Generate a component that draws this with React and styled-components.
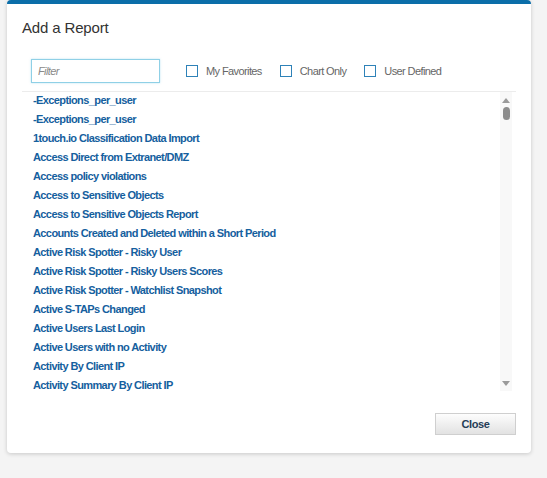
import React from "react";
import styled, { createGlobalStyle } from "styled-components";

const GlobalStyle = createGlobalStyle`
  body {
    margin: 0;
    background: #f4f4f4;
    font-family: "Liberation Sans", Arial, sans-serif;
  }
`;

const Page = styled.div`
  padding-left: 7px;
  height: 478px;
  box-sizing: border-box;
`;

const Modal = styled.div`
  width: 524px;
  height: 453px;
  box-sizing: border-box;
  background: #fff;
  border-top: 4px solid #0b6ea9;
  border-radius: 4px;
  box-shadow: 0 1px 4px rgba(0, 0, 0, 0.18);
  padding: 0 15px 18px 15px;
  display: flex;
  flex-direction: column;
`;

const Title = styled.h2`
  margin: 0;
  height: 47px;
  display: flex;
  align-items: center;
  font-size: 15px;
  font-weight: normal;
  letter-spacing: -0.15px;
  color: #333;
`;

const FilterRow = styled.div`
  display: flex;
  align-items: center;
  padding: 8px 0 8px 9px;
  border-bottom: 1px solid #ececec;
`;

const FilterInput = styled.input`
  width: 129px;
  height: 24px;
  box-sizing: border-box;
  border: 1px solid #8fd0e6;
  box-shadow: 0 0 2px rgba(120, 200, 230, 0.5);
  padding: 0 6px;
  font-family: "Liberation Sans", Arial, sans-serif;
  font-size: 11px;
  letter-spacing: -0.6px;
  color: #333;
  outline: none;
  margin-right: 26px;

  &::placeholder {
    color: #8a8a8a;
    font-style: italic;
  }
`;

const Check = styled.label`
  display: flex;
  align-items: center;
  gap: 8px;
  margin-right: 18px;
  font-size: 11px;
  letter-spacing: -0.6px;
  color: #666;
`;

const Box = styled.span`
  width: 12px;
  height: 12px;
  box-sizing: border-box;
  border: 1px solid #2e82b8;
  background: #fff;
`;

const ListArea = styled.div`
  display: flex;
  height: 299px;
  padding-right: 4px;
`;

const List = styled.ul`
  flex: 1;
  margin: 0;
  padding: 0 0 0 11px;
  list-style: none;
  overflow: hidden;
`;

const Item = styled.li`
  height: 19px;
  line-height: 17px;
  font-size: 11px;
  font-weight: bold;
  letter-spacing: -0.6px;
  color: #15609e;
  white-space: nowrap;
  cursor: pointer;
`;

const Scrollbar = styled.div`
  width: 12px;
  background: #f8f8f8;
  display: flex;
  flex-direction: column;
  align-items: center;
  padding: 6px 0 5px;
  box-sizing: border-box;
`;

const Arrow = styled.span`
  width: 0;
  height: 0;
  border-left: 4px solid transparent;
  border-right: 4px solid transparent;
  ${(p) =>
    p.down
      ? "border-top: 5px solid #9a9a9a; margin-top: auto;"
      : "border-bottom: 5px solid #9a9a9a;"}
`;

const Thumb = styled.span`
  width: 7px;
  height: 13px;
  margin-top: 4px;
  border-radius: 4px;
  background: #8c8c8c;
`;

const Footer = styled.div`
  margin-top: auto;
  display: flex;
  justify-content: flex-end;
`;

const Button = styled.button`
  width: 81px;
  height: 22px;
  border: 1px solid #cfcfcf;
  background: linear-gradient(#fdfdfd, #e2e2e2);
  font-family: "Liberation Sans", Arial, sans-serif;
  font-size: 11px;
  font-weight: bold;
  letter-spacing: -0.4px;
  color: #253d57;
  cursor: pointer;
`;

const reports = [
  "-Exceptions_per_user",
  "-Exceptions_per_user",
  "1touch.io Classification Data Import",
  "Access Direct from Extranet/DMZ",
  "Access policy violations",
  "Access to Sensitive Objects",
  "Access to Sensitive Objects Report",
  "Accounts Created and Deleted within a Short Period",
  "Active Risk Spotter - Risky User",
  "Active Risk Spotter - Risky Users Scores",
  "Active Risk Spotter - Watchlist Snapshot",
  "Active S-TAPs Changed",
  "Active Users Last Login",
  "Active Users with no Activity",
  "Activity By Client IP",
  "Activity Summary By Client IP",
];

const App = () => {
  return (
    <>
      <GlobalStyle />
      <Page>
        <Modal>
          <Title>Add a Report</Title>
          <FilterRow>
            <FilterInput placeholder="Filter" />
            <Check>
              <Box /> My Favorites
            </Check>
            <Check>
              <Box /> Chart Only
            </Check>
            <Check>
              <Box /> User Defined
            </Check>
          </FilterRow>
          <ListArea>
            <List>
              {reports.map((r, i) => (
                <Item key={i}>{r}</Item>
              ))}
            </List>
            <Scrollbar>
              <Arrow />
              <Thumb />
              <Arrow down />
            </Scrollbar>
          </ListArea>
          <Footer>
            <Button>Close</Button>
          </Footer>
        </Modal>
      </Page>
    </>
  );
};

export default App;
